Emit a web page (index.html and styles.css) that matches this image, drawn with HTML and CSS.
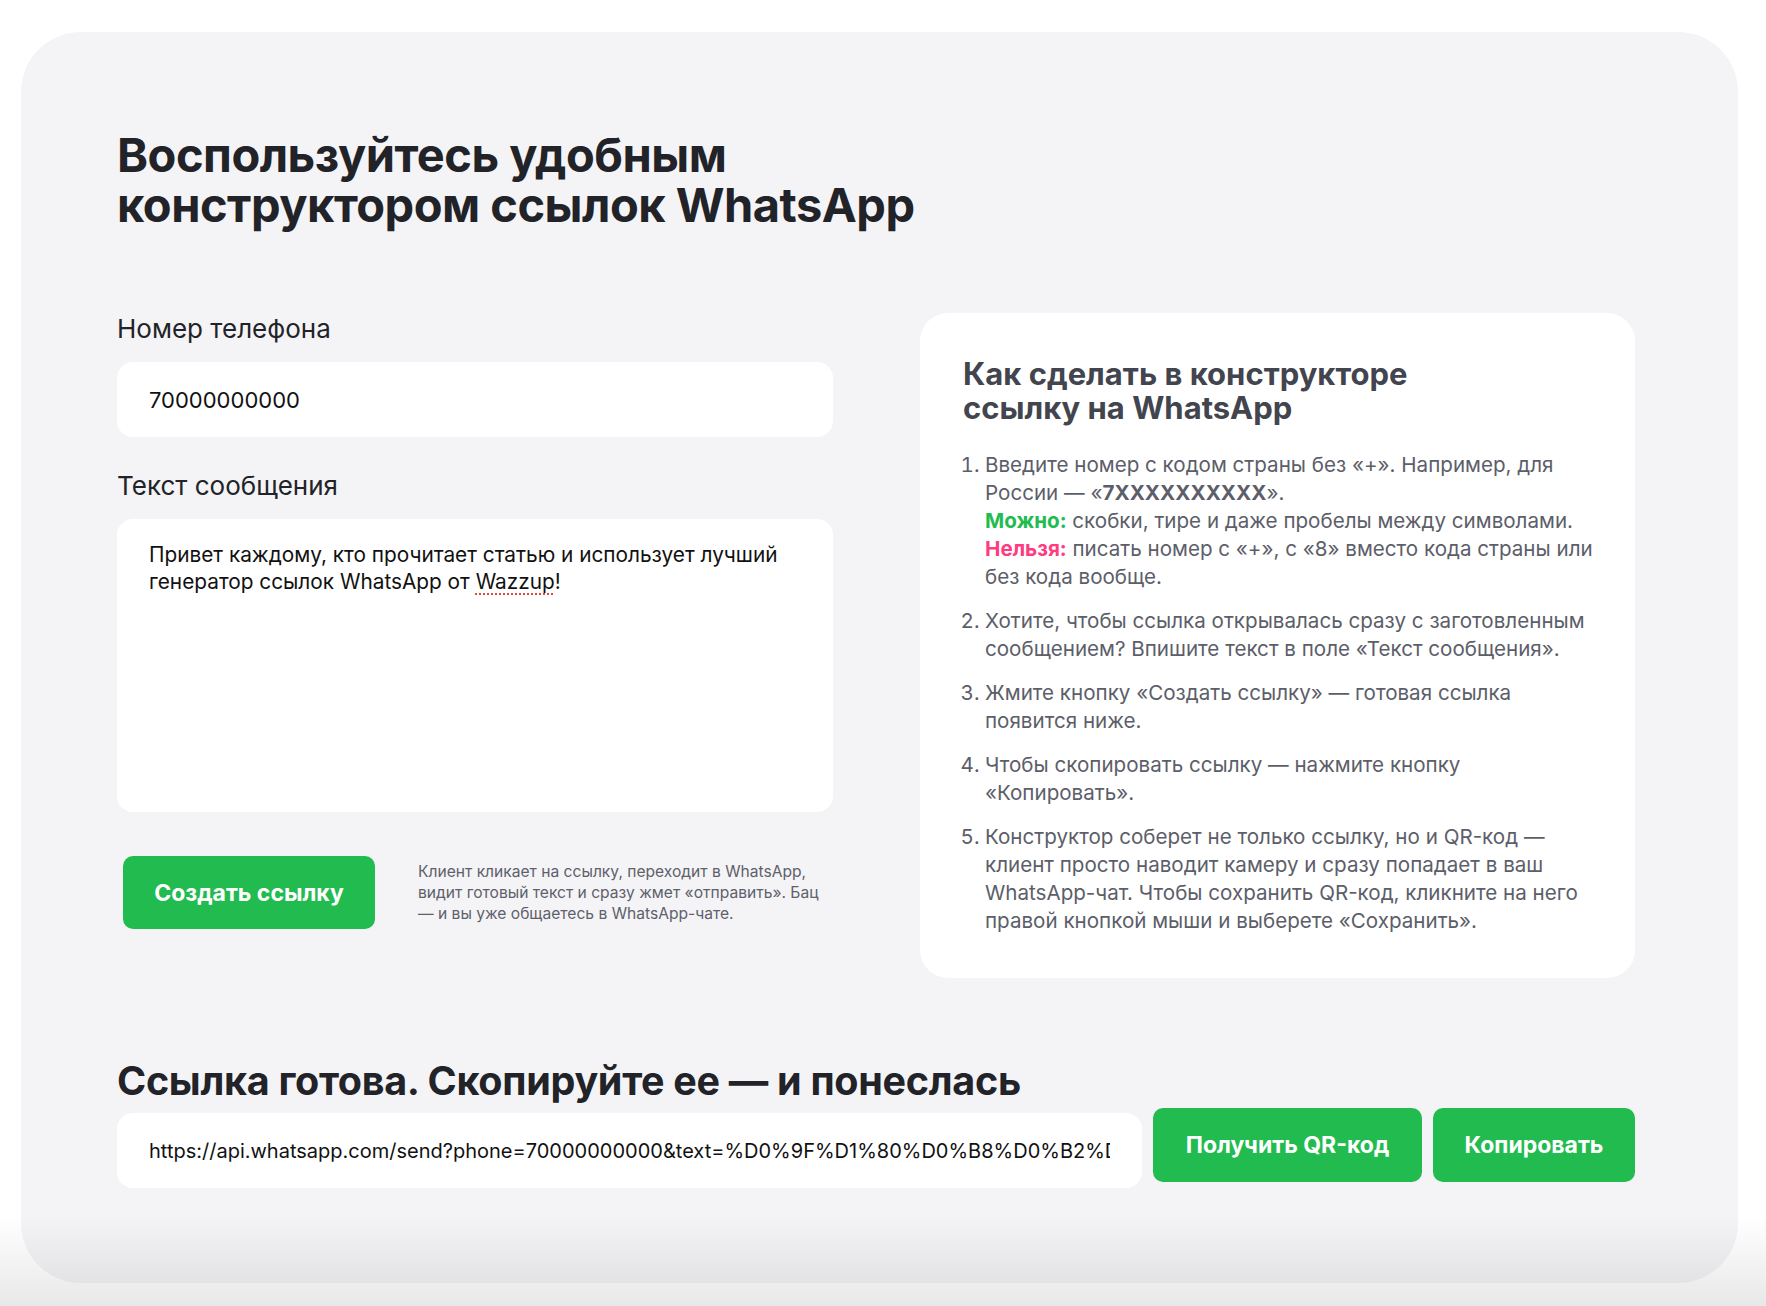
FILE: index.html
```html
<!DOCTYPE html>
<html lang="ru">
<head>
  <meta charset="UTF-8" />
  <meta name="viewport" content="width=device-width, initial-scale=1.0"/>
  <title>Конструктор ссылок WhatsApp</title>
  <link rel="stylesheet" href="styles.css">
</head>
<body>

  <section class="builder-card">
    <h1>Воспользуйтесь удобным<br>конструктором ссылок WhatsApp</h1>

    <div class="builder">
      <!-- FORM -->
      <div class="form-area">
        <label class="field-label" for="phone">Номер телефона</label>
        <input class="field" type="text" id="phone" value="70000000000" />

        <label class="field-label second">Текст сообщения</label>
        <div class="field textarea">Привет каждому, кто прочитает статью и использует лучший генератор ссылок WhatsApp от <span class="typo">Wazzup</span>!</div>

        <div class="actions">
          <button class="btn btn-create">Создать ссылку</button>
          <p class="hint">Клиент кликает на ссылку, переходит в WhatsApp, видит готовый текст и сразу жмет «отправить». Бац — и вы уже общаетесь в WhatsApp-чате.</p>
        </div>
      </div>

      <!-- HOW TO -->
      <div class="howto">
        <h2>Как сделать в конструкторе ссылку на WhatsApp</h2>
        <ol>
          <li>Введите номер с кодом страны без «+». Например, для России — «<b>7XXXXXXXXXX</b>».<br>
            <b class="ok">Можно:</b> скобки, тире и даже пробелы между символами.<br>
            <b class="no">Нельзя:</b> писать номер с «+», с «8» вместо кода страны или без кода вообще.</li>
          <li>Хотите, чтобы ссылка открывалась сразу с заготовленным сообщением? Впишите текст в поле «Текст сообщения».</li>
          <li>Жмите кнопку «Создать ссылку» — готовая ссылка появится ниже.</li>
          <li>Чтобы скопировать ссылку — нажмите кнопку «Копировать».</li>
          <li>Конструктор соберет не только ссылку, но и QR-код — клиент просто наводит камеру и сразу попадает в ваш WhatsApp-чат. Чтобы сохранить QR-код, кликните на него правой кнопкой мыши и выберете «Сохранить».</li>
        </ol>
      </div>
    </div>

    <!-- RESULT -->
    <h2 class="result-title">Ссылка готова. Скопируйте ее — и понеслась</h2>
    <div class="result-row">
      <input class="field url" type="text" readonly value="https://api.whatsapp.com/send?phone=70000000000&amp;text=%D0%9F%D1%80%D0%B8%D0%B2%D0%B5%D1%82%20%D0%BA%D0%B0%D0%B6%D0%B4%D0%BE%D0%BC%D1%83" />
      <button class="btn btn-qr">Получить QR-код</button>
      <button class="btn btn-copy">Копировать</button>
    </div>
  </section>

</body>
</html>
```

FILE: styles.css
```css
body {
  font-family: 'Inter', 'Noto Sans', sans-serif;
  background-color: #ffffff;
  margin: 0;
  padding: 32px 28px 0 21px;
  color: #222328;
}

body::after {
  content: "";
  position: fixed;
  left: 0;
  right: 0;
  bottom: 0;
  height: 90px;
  background: linear-gradient(to bottom, rgba(0, 0, 0, 0), rgba(0, 0, 0, 0.09));
  pointer-events: none;
}

.builder-card {
  background-color: #f4f4f6;
  border-radius: 60px;
  padding: 98px 103px 95px 96px;
}

h1 {
  font-size: 47px;
  line-height: 50px;
  font-weight: 700;
  letter-spacing: -0.5px;
  margin: 0 0 83px;
}

.builder {
  display: grid;
  grid-template-columns: 716px 715px;
  column-gap: 87px;
  align-items: start;
}

.form-area {
  display: flex;
  flex-direction: column;
}

.field-label {
  font-size: 26px;
  line-height: 32px;
  margin-bottom: 17px;
}

.field-label.second {
  margin-top: 33px;
}

.field {
  box-sizing: border-box;
  background-color: #ffffff;
  border: none;
  border-radius: 16px;
  height: 75px;
  padding: 0 32px;
  font-family: inherit;
  font-size: 22px;
  color: #111;
  outline: none;
}

.textarea {
  height: 293px;
  padding: 22px 32px;
  font-size: 20.8px;
  line-height: 27px;
}

.typo {
  text-decoration: underline dotted #e8453c;
  text-underline-offset: 4px;
  text-decoration-thickness: 2px;
}

.actions {
  display: flex;
  align-items: center;
  gap: 43px;
  margin-top: 44px;
  padding-left: 6px;
}

.btn {
  background-color: #22bb50;
  color: #ffffff;
  border: none;
  border-radius: 10px;
  height: 74px;
  font-family: inherit;
  font-size: 23px;
  font-weight: 700;
  cursor: pointer;
  transition: background 0.3s;
}

.btn:hover {
  background-color: #1ea547;
}

.btn-create {
  width: 252px;
  height: 73px;
  flex-shrink: 0;
}

.hint {
  margin: 0;
  max-width: 405px;
  font-size: 15.6px;
  line-height: 21px;
  color: #5e606b;
}

.howto {
  background-color: #ffffff;
  border-radius: 28px;
  padding: 44px 34px 43px 43px;
  color: #5c5e69;
}

.howto h2 {
  max-width: 470px;
  font-size: 31px;
  line-height: 34px;
  font-weight: 700;
  color: #42444e;
  margin: 0 0 26px;
}

.howto ol {
  margin: 0;
  padding-left: 22px;
  font-size: 20.6px;
  line-height: 28px;
}

.howto li + li {
  margin-top: 16px;
}

.howto b {
  font-weight: 700;
}

.howto .ok {
  color: #22bb50;
}

.howto .no {
  color: #ff3b82;
}

.result-title {
  font-size: 39.5px;
  line-height: 48px;
  font-weight: 700;
  letter-spacing: -0.3px;
  margin: 79px 0 3px;
}

.result-row {
  display: flex;
  align-items: flex-start;
  gap: 11px;
}

.url {
  flex: 1;
  min-width: 0;
  margin-top: 5px;
  font-size: 20px;
}

.btn-qr {
  width: 269px;
}

.btn-copy {
  width: 202px;
}
```
